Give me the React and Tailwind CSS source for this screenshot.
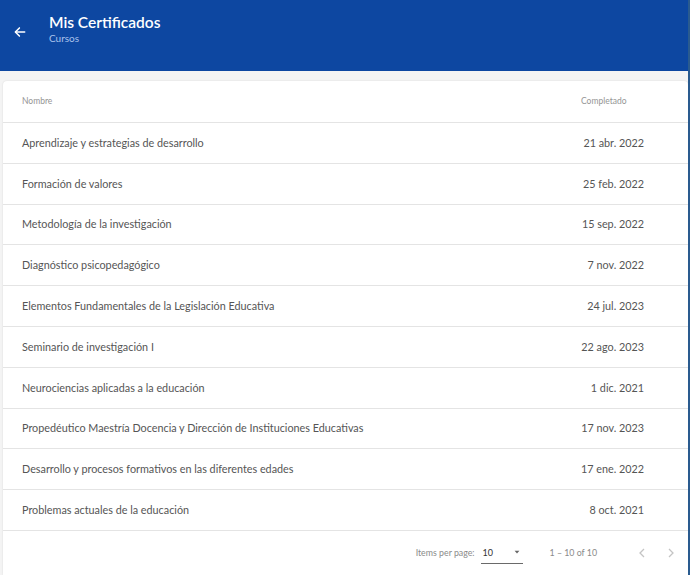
import React from "react";

const rows = [
  ["Aprendizaje y estrategias de desarrollo", "21 abr. 2022"],
  ["Formación de valores", "25 feb. 2022"],
  ["Metodología de la investigación", "15 sep. 2022"],
  ["Diagnóstico psicopedagógico", "7 nov. 2022"],
  ["Elementos Fundamentales de la Legislación Educativa", "24 jul. 2023"],
  ["Seminario de investigación I", "22 ago. 2023"],
  ["Neurociencias aplicadas a la educación", "1 dic. 2021"],
  ["Propedéutico Maestría Docencia y Dirección de Instituciones Educativas", "17 nov. 2023"],
  ["Desarrollo y procesos formativos en las diferentes edades", "17 ene. 2022"],
  ["Problemas actuales de la educación", "8 oct. 2021"],
];

export default function App() {
  return (
    <div className="flex w-[690px] h-[575px] overflow-hidden bg-[#f4f4f4]" style={{ fontFamily: "Lato, 'Noto Sans', sans-serif" }}>
      <div className="flex-1 flex flex-col">
        <div className="h-[71px] bg-[#0d47a1] flex items-start pt-[12px] pl-[13px] shrink-0">
          <svg width="14" height="14" viewBox="0 0 24 24" className="mt-[13px]" fill="none" stroke="white" strokeWidth="2.6" strokeLinecap="round" strokeLinejoin="round">
            <path d="M20 12H5" />
            <path d="M11 5l-7 7 7 7" />
          </svg>
          <div className="ml-[22px] flex flex-col">
            <div className="text-white text-[15.5px] font-semibold leading-[20px]">Mis Certificados</div>
            <div className="text-[#a9c3ec] text-[10px] leading-[12px]">Cursos</div>
          </div>
        </div>
        <div className="flex-1 pt-[10px] pl-[3px]">
          <div className="bg-white rounded-t-[4px] shadow-[0_0_2px_rgba(0,0,0,0.12)] h-full flex flex-col">
            <div className="h-[42px] flex items-center border-b border-[#e4e4e4] text-[8.5px] text-[#959595]">
              <div className="flex-1 pl-[19px]">Nombre</div>
              <div className="w-[107px]">Completado</div>
            </div>
            {rows.map(([n, d]) => (
              <div key={n} className="h-[40.8px] flex items-center border-b border-[#e4e4e4] text-[10.8px] text-[#555555]">
                <div className="flex-1 pl-[19px]">{n}</div>
                <div className="pr-[44px] text-right">{d}</div>
              </div>
            ))}
            <div className="flex items-center justify-end h-[44px] text-[8.8px] text-[#8a8a8a]">
              <span>Items per page:</span>
              <div className="ml-[6px] w-[42px] h-[22px] flex items-center justify-between border-b border-[#6a6a6a] text-[#333] text-[9px]">
                <span className="pl-[2px]">10</span>
                <svg width="8" height="8" viewBox="0 0 10 10" className="mr-[2px]"><path d="M2 3.5h6L5 7z" fill="#666" /></svg>
              </div>
              <span className="ml-[27px]">1 – 10 of 10</span>
              <svg width="10" height="12" viewBox="0 0 10 12" className="ml-[40px]" fill="none" stroke="#c4c4c4" strokeWidth="1.3"><path d="M7 2L3 6l4 4" /></svg>
              <svg width="10" height="12" viewBox="0 0 10 12" className="ml-[19px] mr-[12px]" fill="none" stroke="#c4c4c4" strokeWidth="1.3"><path d="M3 2l4 4-4 4" /></svg>
            </div>
          </div>
        </div>
      </div>
      <div className="w-[2px] bg-[#2a5b8f] shrink-0" />
    </div>
  );
}
